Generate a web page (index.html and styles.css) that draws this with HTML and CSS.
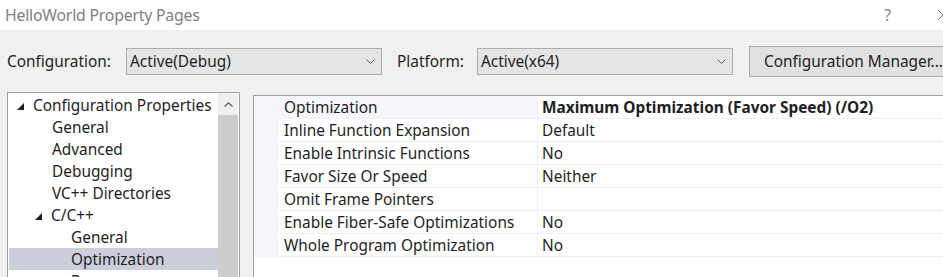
FILE: index.html
```html
<!DOCTYPE html>
<html lang="en">
<head>
  <meta charset="UTF-8" />
  <title>HelloWorld Property Pages</title>
  <link rel="stylesheet" href="styles.css">
</head>
<body>
  <div class="titlebar">
    <span class="title">HelloWorld Property Pages</span>
    <span class="help">?</span>
    <svg class="close" width="12" height="12" viewBox="0 0 12 12"><path d="M1 1 L11 11 M11 1 L1 11" stroke="#777" stroke-width="1" fill="none"/></svg>
  </div>

  <div class="toolbar">
    <span class="field-label label-config">Configuration:</span>
    <div class="combo">
      <span>Active(Debug)</span>
      <svg width="9" height="5" viewBox="0 0 9 5"><polyline points="0.5,0.5 4.5,4.5 8.5,0.5" stroke="#606060" fill="none"/></svg>
    </div>
    <span class="field-label label-platform">Platform:</span>
    <div class="combo">
      <span>Active(x64)</span>
      <svg width="9" height="5" viewBox="0 0 9 5"><polyline points="0.5,0.5 4.5,4.5 8.5,0.5" stroke="#606060" fill="none"/></svg>
    </div>
    <div class="button">Configuration Manager...</div>
  </div>

  <div class="main">
    <div class="tree">
      <ul class="tree-items">
        <li class="level0"><svg class="twisty" width="7" height="7" viewBox="0 0 7 7"><polygon points="7,0 7,7 0,7" fill="#1e1e1e"/></svg>Configuration Properties</li>
        <li class="level1">General</li>
        <li class="level1">Advanced</li>
        <li class="level1">Debugging</li>
        <li class="level1">VC++ Directories</li>
        <li class="level1 open"><svg class="twisty" width="7" height="7" viewBox="0 0 7 7"><polygon points="7,0 7,7 0,7" fill="#1e1e1e"/></svg>C/C++</li>
        <li class="level2">General</li>
        <li class="level2 selected">Optimization</li>
        <li class="level2">Preprocessor</li>
      </ul>
      <div class="scrollbar">
        <div class="scroll-up">
          <svg width="9" height="5" viewBox="0 0 9 5"><polyline points="0.5,4.5 4.5,0.8 8.5,4.5" stroke="#606060" stroke-width="1.3" fill="none"/></svg>
        </div>
        <div class="thumb"></div>
      </div>
    </div>

    <div class="grid">
      <div class="row current">
        <div class="gutter"></div>
        <div class="name">Optimization</div>
        <div class="value bold">Maximum Optimization (Favor Speed) (/O2)</div>
      </div>
      <div class="row">
        <div class="gutter"></div>
        <div class="name">Inline Function Expansion</div>
        <div class="value">Default</div>
      </div>
      <div class="row">
        <div class="gutter"></div>
        <div class="name">Enable Intrinsic Functions</div>
        <div class="value">No</div>
      </div>
      <div class="row">
        <div class="gutter"></div>
        <div class="name">Favor Size Or Speed</div>
        <div class="value">Neither</div>
      </div>
      <div class="row">
        <div class="gutter"></div>
        <div class="name">Omit Frame Pointers</div>
        <div class="value"></div>
      </div>
      <div class="row">
        <div class="gutter"></div>
        <div class="name">Enable Fiber-Safe Optimizations</div>
        <div class="value">No</div>
      </div>
      <div class="row">
        <div class="gutter"></div>
        <div class="name">Whole Program Optimization</div>
        <div class="value">No</div>
      </div>
    </div>
  </div>
</body>
</html>
```

FILE: styles.css
```css
* {
  box-sizing: border-box;
}

html, body {
  margin: 0;
  padding: 0;
  height: 100%;
  overflow: hidden;
}

body {
  background: #f0f0f0;
  font-family: 'Noto Sans', 'Open Sans', sans-serif;
  font-size: 15.4px;
  color: #1e1e1e;
}

/* title bar */
.titlebar {
  height: 30px;
  background: #ffffff;
  display: flex;
  align-items: center;
  padding-left: 5px;
  white-space: nowrap;
}

.title {
  flex: 1;
  font-size: 15.8px;
  color: #808080;
  letter-spacing: -0.2px;
}

.help {
  font-size: 15.8px;
  color: #808080;
  margin-right: 46px;
}

.close {
  margin-right: -6px;
  flex-shrink: 0;
}

/* configuration row */
.toolbar {
  display: flex;
  align-items: center;
  height: 31px;
  margin-top: 16px;
  padding-left: 7px;
  white-space: nowrap;
}

.field-label {
  flex-shrink: 0;
}

.label-config {
  width: 119px;
}

.label-platform {
  width: 80px;
  margin-left: 15px;
}

.combo {
  flex-shrink: 0;
  width: 256px;
  height: 27px;
  border: 1px solid #adadad;
  background: #e5e5e5;
  display: flex;
  align-items: center;
  justify-content: space-between;
  padding: 0 6px 0 3px;
}

.button {
  flex-shrink: 0;
  width: 200px;
  height: 31px;
  margin-left: 16px;
  border: 1px solid #adadad;
  background: #e1e1e1;
  display: flex;
  align-items: center;
  padding-left: 14px;
  overflow: hidden;
}

/* left tree + property grid */
.main {
  display: flex;
  align-items: flex-start;
  margin-top: 15px;
  padding-left: 7px;
}

.tree {
  flex-shrink: 0;
  width: 233px;
  height: 200px;
  border: 1px solid #a0a0a0;
  background: #ffffff;
  display: flex;
}

.tree-items {
  list-style: none;
  margin: 0;
  padding: 1px 0 0 1px;
  flex: 1;
  overflow: hidden;
}

.tree-items li {
  height: 22px;
  display: flex;
  align-items: center;
  white-space: nowrap;
}

.twisty {
  margin-right: 9px;
  margin-top: 2px;
}

.level0 { padding-left: 8px; }
.level1 { padding-left: 43px; }
.level1.open { padding-left: 26px; }
.level2 { padding-left: 62px; }

.tree-items li.selected {
  background: #cccedb;
}

.scrollbar {
  width: 20px;
  margin-right: 1px;
  background: #f0f0f0;
  display: flex;
  flex-direction: column;
}

.scroll-up {
  height: 22px;
  display: flex;
  align-items: center;
  justify-content: center;
}

.thumb {
  flex: 1;
  background: #cdcdcd;
}

.grid {
  flex-shrink: 0;
  width: 720px;
  height: 200px;
  margin-left: 13px;
  margin-top: 3px;
  border-top: 1px solid #a0a0a0;
  border-left: 1px solid #a0a0a0;
  background: #ffffff;
}

.row {
  display: grid;
  grid-template-columns: 25px 259px 1fr;
  height: 23px;
}

.gutter {
  background: #f5f7fb;
}

.name, .value {
  border-bottom: 1px solid #eef0f4;
  display: flex;
  align-items: center;
  white-space: nowrap;
}

.name {
  border-right: 1px solid #eef0f4;
  padding-left: 5px;
}

.value {
  padding-left: 4px;
}

.row.current .name {
  background: #f5f7fb;
}

.bold {
  font-weight: 700;
}
```
